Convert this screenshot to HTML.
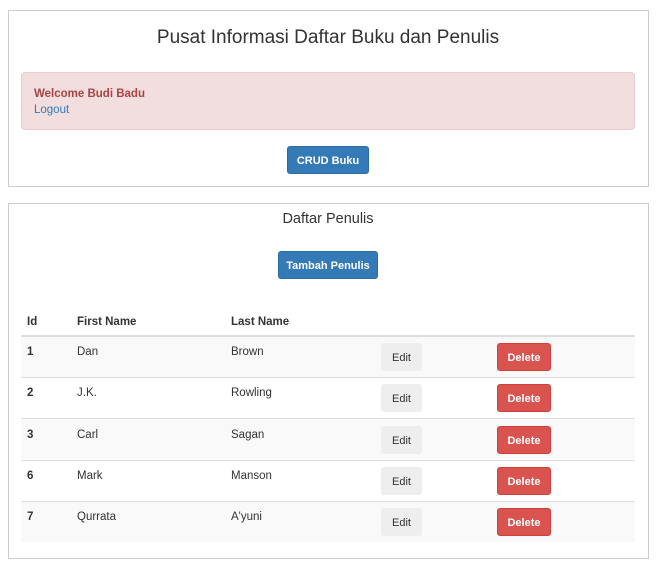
<!DOCTYPE html>
<html><head><style>
*{box-sizing:border-box;margin:0;padding:0}
body{width:656px;height:571px;background:#fff;font-family:"Liberation Sans",Arial,sans-serif;font-size:11.5px;color:#333;position:relative;overflow:hidden}
.p{position:absolute;border:1px solid #ccc;background:#fff}
.a{position:absolute}
.btn{position:absolute;border-radius:3px;font-size:11px;text-align:center;font-weight:bold}
.blue{background:#337ab7;border:1px solid #2e6da4;color:#fff}
.red{background:#d9534f;border:1px solid #d43f3a;color:#fff;font-weight:bold}
.gray{background:#eee;color:#333;font-weight:normal}
.row{position:absolute;left:21px;width:614px;height:41px;border-top:1px solid #ddd}
</style></head><body>
<div class="p" style="left:8px;top:10px;width:641px;height:177px"></div>
<div class="a" style="left:0;width:656px;top:27px;text-align:center;font-size:19px;color:#333">Pusat Informasi Daftar Buku dan Penulis</div>
<div class="a" style="left:21px;top:72px;width:614px;height:58px;background:#f2dede;border:1px solid #ebccd1;border-radius:4px"></div>
<div class="a" style="left:34px;top:88px;font-weight:bold;color:#a94442">Welcome Budi Badu</div>
<div class="a" style="left:34px;top:104px;color:#337ab7">Logout</div>
<div class="btn blue" style="left:287px;top:146px;width:82px;height:28px;line-height:28px">CRUD Buku</div>

<div class="p" style="left:8px;top:203px;width:641px;height:356px"></div>
<div class="a" style="left:0;width:656px;top:211px;text-align:center;font-size:14.5px">Daftar Penulis</div>
<div class="btn blue" style="left:278px;top:251px;width:100px;height:28px;line-height:28px">Tambah Penulis</div>
<div class="a" style="left:27px;top:316px;font-weight:bold">Id</div>
<div class="a" style="left:77px;top:316px;font-weight:bold">First Name</div>
<div class="a" style="left:231px;top:316px;font-weight:bold">Last Name</div>
<div class="a" style="left:21px;top:335px;width:614px;height:2px;background:#ddd"></div>

<div class="row" style="top:337px;background:#f9f9f9;border-top:none;height:41px"></div>
<div class="row" style="top:377px"></div>
<div class="row" style="top:418px;background:#f9f9f9"></div>
<div class="row" style="top:460px"></div>
<div class="row" style="top:501px;background:#f9f9f9"></div>

<div class="a" style="left:27px;top:346px;font-weight:bold">1</div><div class="a" style="left:77px;top:346px">Dan</div><div class="a" style="left:231px;top:346px">Brown</div>
<div class="a" style="left:27px;top:387px;font-weight:bold">2</div><div class="a" style="left:77px;top:387px">J.K.</div><div class="a" style="left:231px;top:387px">Rowling</div>
<div class="a" style="left:27px;top:429px;font-weight:bold">3</div><div class="a" style="left:77px;top:429px">Carl</div><div class="a" style="left:231px;top:429px">Sagan</div>
<div class="a" style="left:27px;top:470px;font-weight:bold">6</div><div class="a" style="left:77px;top:470px">Mark</div><div class="a" style="left:231px;top:470px">Manson</div>
<div class="a" style="left:27px;top:511px;font-weight:bold">7</div><div class="a" style="left:77px;top:511px">Qurrata</div><div class="a" style="left:231px;top:511px">A'yuni</div>

<div class="btn gray" style="left:381px;top:343px;width:41px;height:28px;line-height:30px">Edit</div>
<div class="btn red" style="left:497px;top:343px;width:54px;height:28px;line-height:28px">Delete</div>
<div class="btn gray" style="left:381px;top:384px;width:41px;height:28px;line-height:30px">Edit</div>
<div class="btn red" style="left:497px;top:384px;width:54px;height:28px;line-height:28px">Delete</div>
<div class="btn gray" style="left:381px;top:426px;width:41px;height:28px;line-height:30px">Edit</div>
<div class="btn red" style="left:497px;top:426px;width:54px;height:28px;line-height:28px">Delete</div>
<div class="btn gray" style="left:381px;top:467px;width:41px;height:28px;line-height:30px">Edit</div>
<div class="btn red" style="left:497px;top:467px;width:54px;height:28px;line-height:28px">Delete</div>
<div class="btn gray" style="left:381px;top:508px;width:41px;height:28px;line-height:30px">Edit</div>
<div class="btn red" style="left:497px;top:508px;width:54px;height:28px;line-height:28px">Delete</div>
</body></html>
